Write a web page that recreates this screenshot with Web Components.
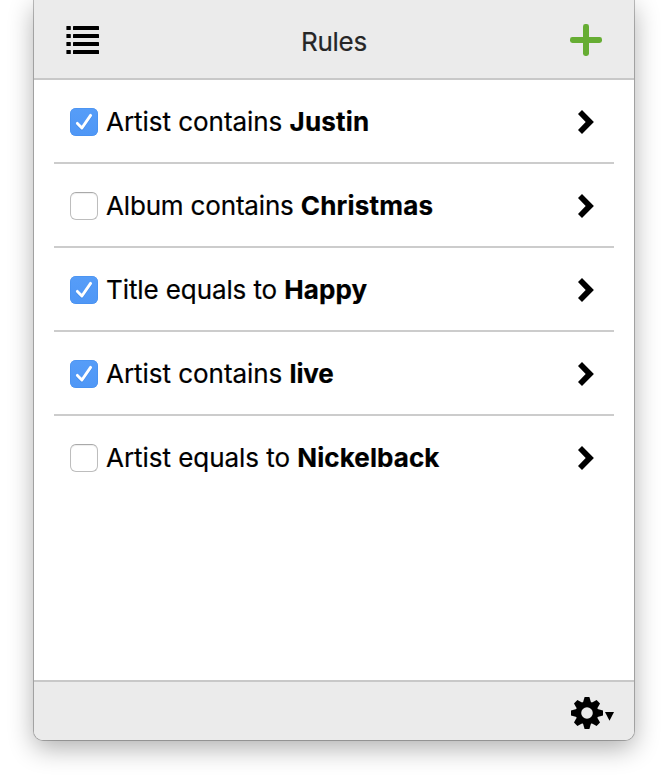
<!DOCTYPE html>
<html lang="en">
<head>
<meta charset="utf-8">
<title>Rules</title>
<style>
html, body { margin: 0; height: 100%; background: #fff; overflow: hidden; }
</style>
</head>
<body>
<rules-panel>
  <rule-row checked style="--ls:-.04px;--bs:.2px">Artist contains <b>Justin</b></rule-row>
  <rule-row style="--ls:-.17px;--bs:.18px">Album contains <b>Christmas</b></rule-row>
  <rule-row checked style="--ls:-.1px;--bs:.1px">Title equals to <b>Happy</b></rule-row>
  <rule-row checked style="--ls:-.04px;--bs:-.2px">Artist contains <b>live</b></rule-row>
  <rule-row style="--ls:-.04px;--bs:.08px">Artist equals to <b>Nickelback</b></rule-row>
</rules-panel>
<script>
const define = (name, html) => customElements.define(name, class extends HTMLElement {
  constructor() {
    super();
    this.attachShadow({ mode: 'open' }).innerHTML = html;
  }
});

define('list-icon', `
<style>:host{display:block;width:34px;height:28px}svg{display:block}</style>
<svg width="34" height="28" viewBox="0 0 34 28">
  <g id="rows">
    <rect x=".4" y="0" width="4.4" height="4" rx=".6"/><rect x="7" y="0" width="26" height="4" rx=".6"/>
    <rect x=".4" y="8" width="4.4" height="4" rx=".6"/><rect x="7" y="8" width="26" height="4" rx=".6"/>
    <rect x=".4" y="16" width="4.4" height="4" rx=".6"/><rect x="7" y="16" width="26" height="4" rx=".6"/>
    <rect x=".4" y="24" width="4.4" height="4" rx=".6"/><rect x="7" y="24" width="26" height="4" rx=".6"/>
  </g>
</svg>`);

define('plus-icon', `
<style>:host{display:block;width:32px;height:32px}svg{display:block}</style>
<svg width="32" height="32" viewBox="0 0 32 32" fill="#66ad33">
  <rect x="0" y="13" width="32" height="6" rx="2.4"/><rect x="13" y="0" width="6" height="32" rx="2.4"/>
</svg>`);

define('chevron-icon', `
<style>:host{display:block;width:16px;height:24px}svg{display:block}</style>
<svg width="16" height="24" viewBox="0 0 16 24"><path d="M0 4 4 0 15.9 12 4 24 0 20 7.7 12Z"/></svg>`);

define('gear-menu', `
<style>:host{display:flex;align-items:center;margin-top:2px}svg{display:block}.arrow{margin:7px 0 0 2px}</style>
<svg width="32" height="32" viewBox="-16 -16 32 32">
  <g id="teeth"></g>
  <circle r="8.6" fill="none" stroke="#000" stroke-width="5.6"/>
</svg>
<svg class="arrow" width="9" height="9" viewBox="0 0 9 9"><path d="M0 0H9L4.5 8.7Z"/></svg>`);

define('check-box', `
<style>
:host{display:block;width:28px;height:28px;flex:none}
.box{box-sizing:border-box;width:28px;height:28px;border:1px solid #bdbdbd;border-top-color:#a9a9a9;border-radius:6px;background:#fff;box-shadow:inset 0 1px 1px #eee}
svg{display:none}
:host([checked]) .box{display:flex;border:0;background:linear-gradient(#569df8,#4f97f6);box-shadow:inset 0 0 0 .5px #458deb}
:host([checked]) svg{display:block}
</style>
<div class="box"><svg width="28" height="28" viewBox="0 0 28 28"><path d="M7.4 15.4 11.9 20 20.6 7.4" transform="translate(0 1)" fill="none" stroke="#286fcb" stroke-opacity=".3" stroke-width="3" stroke-linecap="round" stroke-linejoin="round"/><path d="M7.4 15.4 11.9 20 20.6 7.4" fill="none" stroke="#fff" stroke-width="2.9" stroke-linecap="round" stroke-linejoin="round"/></svg></div>`);

customElements.define('rule-row', class extends HTMLElement {
  constructor() {
    super();
    this.attachShadow({ mode: 'open' }).innerHTML = `
<style>
:host{display:flex;align-items:center;box-sizing:border-box;height:84px;padding:2px 20px 0 16px;border-bottom:2px solid #ccc;font-size:26px;color:#000}
:host(:last-of-type){border-bottom-color:transparent}
.label{flex:1;margin-left:8px;white-space:pre;line-height:32px;letter-spacing:var(--ls);-webkit-text-stroke:.2px}
::slotted(b){font-weight:700;letter-spacing:var(--bs)}
</style>
<check-box></check-box><span class="label"><slot></slot></span><chevron-icon></chevron-icon>`;
    this.shadowRoot.querySelector('check-box').toggleAttribute('checked', this.hasAttribute('checked'));
  }
});

define('rules-panel', `
<style>
:host{display:flex;flex-direction:column;box-sizing:border-box;width:600px;height:740px;margin:0 34px;background:#fff;border-radius:0 0 9px 9px;
  font-family:Inter,"Liberation Sans",sans-serif;
  box-shadow:0 0 0 1px rgba(0,0,0,.25),0 8px 26px rgba(0,0,0,.32)}
header{display:flex;align-items:center;justify-content:space-between;box-sizing:border-box;height:80px;padding:2px 32px 0;background:#ebebeb;border-bottom:2px solid #c8c8c8}
h1{margin:3px 2px 0 0;font-size:26px;font-weight:400;line-height:32px;letter-spacing:-.3px;color:#262626;-webkit-text-stroke:.2px}
main{flex:1;padding:0 20px}
footer{display:flex;justify-content:flex-end;align-items:center;box-sizing:border-box;height:60px;padding:2px 20px 0 0;background:#ebebeb;border-top:2px solid #c8c8c8;border-radius:0 0 9px 9px}
</style>
<header><list-icon></list-icon><h1>Rules</h1><plus-icon></plus-icon></header>
<main><slot></slot></main>
<footer><gear-menu></gear-menu></footer>`);

const gear = document.querySelector('rules-panel').shadowRoot.querySelector('gear-menu').shadowRoot.getElementById('teeth');
gear.innerHTML = [0, 45, 90, 135, 180, 225, 270, 315]
  .map(a => `<path transform="rotate(${a})" d="M-4.3-9.5-2.4-16H2.4L4.3-9.5Z"/>`).join('');
</script>
</body>
</html>
